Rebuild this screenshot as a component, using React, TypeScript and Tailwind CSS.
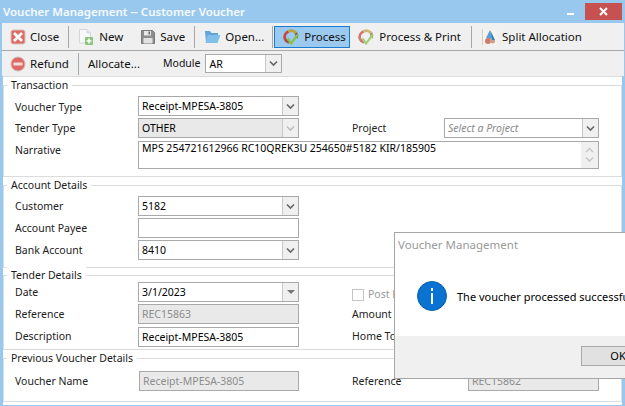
import React from "react";

const font = { fontFamily: '"Noto Sans","Liberation Sans",sans-serif' };

function Chevron({ color = "#555" }: { color?: string }) {
  return (
    <svg width="9" height="7" viewBox="0 0 9 7">
      <path d="M1 1.5 L4.5 5 L8 1.5" fill="none" stroke={color} strokeWidth="1.6" />
    </svg>
  );
}

function Combo({ value, w = "w-[161px]", h = "h-5", disabled, italic, triangle }: { value: string; w?: string; h?: string; disabled?: boolean; italic?: boolean; triangle?: boolean }) {
  return (
    <div className={`${w} ${h} flex border border-[#a9a9a9] text-[10.5px] ${disabled ? "bg-[#e9e9e9]" : "bg-white"}`}>
      <div className={`flex-1 pl-[3px] leading-[18px] overflow-hidden whitespace-nowrap ${italic ? "italic text-[#8a8a8a]" : "text-black"}`}>{value}</div>
      <div className="w-4 flex items-center justify-center bg-[#f0f0f0] border-l border-[#c8c8c8]">
        {triangle ? (
          <svg width="8" height="4" viewBox="0 0 8 4"><path d="M0 0H8L4 4Z" fill="#777" /></svg>
        ) : (
          <Chevron color={disabled ? "#bdbdbd" : "#666"} />
        )}
      </div>
    </div>
  );
}

function Input({ value = "", w = "w-[161px]", disabled }: { value?: string; w?: string; disabled?: boolean }) {
  return (
    <div className={`${w} h-5 border border-[#a9a9a9] pl-[3px] text-[10.5px] leading-[18px] whitespace-nowrap ${disabled ? "bg-[#e9e9e9] text-[#8c8c8c]" : "bg-white text-black"}`}>{value}</div>
  );
}

function Group({ title, h, children }: { title: string; h: string; children: React.ReactNode }) {
  return (
    <div className={`relative border border-[#dcdcdc] ${h}`}>
      <span className="absolute left-[3px] top-[-9px] bg-white px-[4px] leading-[16px] text-[#1a1a1a] whitespace-nowrap">{title}</span>
      {children}
    </div>
  );
}

function Row({ label, children, mt }: { label: string; children?: React.ReactNode; mt: string }) {
  return (
    <div className={`flex items-center ${mt}`}>
      <div className="w-[134px] pl-[11px] pt-[2px] text-[#222] whitespace-nowrap">{label}</div>
      {children}
    </div>
  );
}

const IconClose = () => (
  <svg width="16" height="16" viewBox="0 0 16 16">
    <rect x="1" y="1" width="14" height="14" rx="2" fill="#dd6a63" stroke="#d9c2bf" />
    <path d="M4 4 L12 12 M12 4 L4 12" stroke="#fff" strokeWidth="2.8" />
  </svg>
);
const IconNew = () => (
  <svg width="18" height="18" viewBox="0 0 18 18">
    <path d="M2.5 1.5H10L13.5 5V15H2.5Z" fill="#f7f8fa" stroke="#d3d7dc" />
    <path d="M10 1.5V5H13.5" fill="#e4e8ec" stroke="#d3d7dc" />
    <rect x="8" y="9" width="8" height="8" rx="1" fill="#8cc47a" />
    <path d="M12 10.5V15.5M9.5 13H14.5" stroke="#fff" strokeWidth="1.6" />
  </svg>
);
const IconSave = () => (
  <svg width="16" height="16" viewBox="0 0 16 16">
    <path d="M1.5 1.5H12.5L14.5 3.5V14.5H1.5Z" fill="#8d8d8d" stroke="#7a7a7a" />
    <rect x="4" y="2" width="7" height="4.5" fill="#e8e8e8" />
    <rect x="8.5" y="2.5" width="1.5" height="3" fill="#666" />
    <rect x="3.5" y="9" width="9" height="5.5" fill="#e2e2e2" />
  </svg>
);
const IconOpen = () => (
  <svg width="17" height="16" viewBox="0 0 17 16">
    <path d="M1 2H6L7.5 4H14V13H2Z" fill="#5fa5d8" />
    <path d="M3.5 6H16.5L13.5 14H1.5Z" fill="#7fc0ea" />
  </svg>
);
const IconProcess = ({ faded }: { faded?: boolean }) => (
  <svg width="18" height="18" viewBox="0 0 18 18" opacity={faded ? 0.7 : 1}>
    <path d="M3 11A6 6 0 0 1 6.5 3.5" fill="none" stroke="#c9443c" strokeWidth="2.8" />
    <path d="M6.5 3.5A6 6 0 0 1 14 5" fill="none" stroke="#b9a53e" strokeWidth="2.8" />
    <path d="M14 5A6 6 0 0 1 14.5 10" fill="none" stroke="#8a5a3b" strokeWidth="2.8" />
    <path d="M3 11A6 6 0 0 0 7 14.5" fill="none" stroke="#b5443e" strokeWidth="2.8" />
    <path d="M5.5 10.5L9 15.5L16 6.5" fill="none" stroke="#86c048" strokeWidth="2.2" />
  </svg>
);
const IconSplit = () => (
  <svg width="16" height="18" viewBox="0 0 16 18">
    <rect x="0" y="1" width="1" height="16" fill="#d8cfc4" />
    <rect x="1" y="1" width="14" height="16" fill="#f6f3ee" />
    <path d="M8 2 L12 10 L8 11 L4 10Z" fill="#5aa0d8" />
    <circle cx="6" cy="13" r="3" fill="#d07a6c" />
    <circle cx="10.5" cy="13" r="2.5" fill="#c8a08c" />
    <path d="M9 4L13 12H10Z" fill="#3f7fb8" />
  </svg>
);
const IconRefund = () => (
  <svg width="16" height="16" viewBox="0 0 16 16">
    <circle cx="8" cy="8" r="7" fill="#dd6a63" stroke="#d9b9b6" />
    <rect x="3.5" y="6.5" width="9" height="3" fill="#f6dddc" />
  </svg>
);

const Sep = ({ h = "h-[22px]" }: { h?: string }) => <div className={`w-px ${h} bg-[#a8a8a8]`} />;

function Tool({ icon, label, className = "" }: { icon: React.ReactNode; label: string; className?: string }) {
  return (
    <div className={`flex items-center gap-[4px] whitespace-nowrap text-[#111] ${className}`}>
      {icon}
      <span>{label}</span>
    </div>
  );
}

export default function App() {
  return (
    <div className="relative w-[625px] h-[406px] overflow-hidden bg-[#99c8ee] text-[10.5px]" style={font}>
      <div className="h-[23px] flex items-center pl-[3px] text-[11.5px] font-semibold text-white/90 relative">
        Voucher Management -- Customer Voucher
        <div className="absolute left-[567px] top-[13px] w-[7px] h-[2px] bg-white" />
        <div className="absolute left-[585px] top-[3px] w-[37px] h-[17px] bg-[#c75050] flex items-center justify-center">
          <svg width="9" height="9" viewBox="0 0 9 9"><path d="M1 1L8 8M8 1L1 8" stroke="#fff" strokeWidth="2" /></svg>
        </div>
      </div>

      <div className="ml-[2px] mr-[1px] bg-[#f0f0f0]">
        <div className="h-[27px] flex items-center text-[11.5px]">
          <Tool icon={<IconClose />} label="Close" className="ml-[8px]" />
          <div className="ml-[9px]"><Sep /></div>
          <Tool icon={<IconNew />} label="New" className="ml-[8px]" />
          <Tool icon={<IconSave />} label="Save" className="ml-[17px]" />
          <div className="ml-[9px]"><Sep /></div>
          <Tool icon={<IconOpen />} label="Open..." className="ml-[9px]" />
          <div className="ml-[8px]"><Sep /></div>
          <Tool icon={<IconProcess />} label="Process" className="ml-[1px] w-[76px] h-[22px] pl-[7px] gap-[3px] bg-[#9cc9ee] border border-[#1b7bd0]" />
          <Tool icon={<IconProcess faded />} label="Process & Print" className="ml-[7px]" />
          <div className="ml-[10px]"><Sep /></div>
          <Tool icon={<IconSplit />} label="Split Allocation" className="ml-[10px]" />
        </div>
        <div className="h-[1px] bg-[#a8a8a8]" />
        <div className="h-[25px] flex items-center text-[11.5px]">
          <Tool icon={<IconRefund />} label="Refund" className="ml-[8px] gap-[4px]" />
          <div className="ml-[9px]"><Sep h="h-[22px]" /></div>
          <span className="ml-[9px] text-[#111]">Allocate...</span>
          <span className="ml-[23px] text-[#111] text-[10.5px]">Module</span>
          <div className="ml-[5px]">
            <Combo value="AR" w="w-[77px]" h="h-[19px]" />
          </div>
        </div>
      </div>

      <div className="ml-[3px] mr-[3px] h-[329px] bg-white border-t border-[#dcdcdc] pt-[8px]">
        <Group title="Transaction" h="h-[92px]">
          <div className="flex items-center mt-[10px]">
            <div className="w-[134px] pl-[11px] pt-[3px] text-[#222] whitespace-nowrap">Voucher Type</div>
            <Combo value="Receipt-MPESA-3805" />
          </div>
          <div className="flex items-center mt-[2px]">
            <div className="w-[134px] pl-[11px] pt-[2px] text-[#222]">Tender Type</div>
            <Combo value="OTHER" disabled />
            <div className="w-[92px] ml-[53px] pt-[2px] text-[#222]">Project</div>
            <Combo value="Select a Project" w="w-[155px]" italic />
          </div>
          <div className="flex items-start mt-[3px]">
            <div className="w-[134px] pl-[11px] pt-[2px] text-[#222]">Narrative</div>
            <div className="w-[461px] h-[28px] border border-[#a9a9a9] flex">
              <div className="flex-1 pl-[3px] text-[10.5px] leading-[13px] text-black whitespace-nowrap">MPS 254721612966 RC10QREK3U 254650#5182 KIR/185905</div>
              <div className="w-[17px] bg-[#f0f0f0] flex flex-col items-center justify-between py-[5px]">
                <svg width="9" height="6" viewBox="0 0 9 6"><path d="M1 5L4.5 1.5L8 5" fill="none" stroke="#c8c8c8" strokeWidth="1.5" /></svg>
                <Chevron color="#c8c8c8" />
              </div>
            </div>
          </div>
        </Group>

        <div className="mt-[8px]">
          <Group title="Account Details" h="h-[83px]">
            <Row label="Customer" mt="mt-[10px]"><Combo value="5182" /></Row>
            <Row label="Account Payee" mt="mt-[2px]"><Input /></Row>
            <Row label="Bank Account" mt="mt-[2px]"><Combo value="8410" /></Row>
          </Group>
        </div>

        <div className="mt-[7px]">
          <Group title="Tender Details" h="h-[75px]">
            <Row label="Date" mt="mt-[6px]"><Combo value="3/1/2023" triangle /></Row>
            <div className="flex items-center mt-[2px]">
              <div className="w-[134px] pl-[11px] pt-[2px] text-[#222]">Reference</div>
              <Input value="REC15863" disabled />
              <div className="ml-[53px] pt-[2px] text-[#222]">Amount</div>
            </div>
            <div className="flex items-center mt-[3px]">
              <div className="w-[134px] pl-[11px] text-[#222]">Description</div>
              <Input value="Receipt-MPESA-3805" />
              <div className="ml-[53px] text-[#222] whitespace-nowrap">Home Total</div>
            </div>
            <div className="absolute left-[348px] top-[11px] flex items-center gap-[4px] text-[#9a9a9a] whitespace-nowrap">
              <div className="w-3 h-3 border border-[#c4c4c4] bg-white" />
              Post Dated
            </div>
          </Group>
        </div>

        <div className="mt-[8px]">
          <Group title="Previous Voucher Details" h="h-[44px]">
            <div className="flex items-center mt-[12px]">
              <div className="w-[135px] pl-[11px] pt-[2px] text-[#222]">Voucher Name</div>
              <Input value="Receipt-MPESA-3805" w="w-[160px]" disabled />
              <div className="ml-[53px] w-[116px] pt-[2px] text-[#222]">Reference</div>
              <Input value="REC15862" w="w-[131px]" disabled />
            </div>
          </Group>
        </div>
      </div>

      <div className="absolute left-[394px] top-[232px] w-[260px] h-[147px] border border-[#a6a6a6] bg-white flex flex-col">
        <div className="h-[24px] pl-[3px] flex items-center text-[#9a9a9a] text-[11.5px] whitespace-nowrap">Voucher Management</div>
        <div className="flex-1 flex items-start">
          <svg className="ml-[22px] mt-[24px] shrink-0" width="30" height="30" viewBox="0 0 30 30">
            <circle cx="15" cy="15" r="14.5" fill="#0a72d0" stroke="#0b5ea8" />
            <rect x="14" y="7" width="2" height="3" fill="#fff" />
            <rect x="14" y="12" width="2" height="11" fill="#fff" />
          </svg>
          <span className="ml-[10px] mt-[32px] text-[11px] text-black whitespace-nowrap">The voucher processed successfully</span>
        </div>
        <div className="h-[42px] bg-[#f0f0f0] pl-[186px] pt-[10px]">
          <div className="w-[80px] h-5 border border-[#a9a9a9] bg-[#e1e1e1] flex items-center justify-center pr-[6px] text-[11px] text-black">OK</div>
        </div>
      </div>
    </div>
  );
}
